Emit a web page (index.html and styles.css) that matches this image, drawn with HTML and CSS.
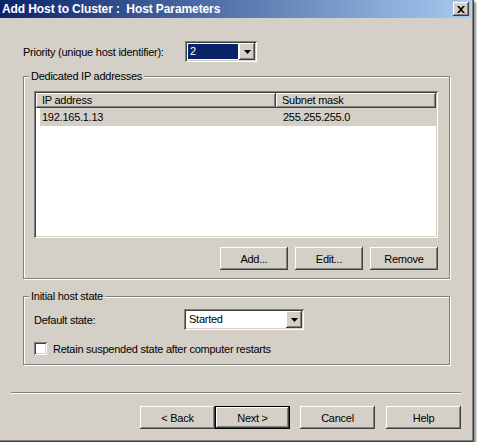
FILE: index.html
```html
<!DOCTYPE html>
<html>
<head>
    <title>Add Host to Cluster</title>
    <link rel="stylesheet" href="styles.css">
</head>
<body>
    <div class="dlg-window">
        <div class="dlg-titlebar">
            <span class="dlg-title">Add Host to Cluster :&nbsp; Host Parameters</span>
            <span class="dlg-close">
                <svg width="8" height="7" viewBox="0 0 8 7"><path d="M0 0h2l2 2 2-2h2L5 3.5 8 7H6L4 5 2 7H0l3-3.5z" fill="#000"/></svg>
            </span>
        </div>

        <div class="dlg-content">
            <div class="field-row priority-row">
                <label class="field-label priority-label">Priority (unique host identifier):</label>
                <div class="combo combo-priority">
                    <div class="combo-field"><span class="combo-value selected">2</span></div>
                    <span class="combo-btn"><svg width="7" height="4" viewBox="0 0 7 4"><path d="M0 0h7L3.5 4z" fill="#000"/></svg></span>
                </div>
            </div>

            <fieldset class="group group-ip">
                <legend>Dedicated IP addresses</legend>
                <div class="listview">
                    <div class="lv-header">
                        <div class="lv-col lv-col-ip">IP address</div>
                        <div class="lv-col lv-col-mask">Subnet mask</div>
                    </div>
                    <div class="lv-row lv-selected">
                        <span class="lv-cell">192.165.1.13</span>
                        <span class="lv-cell lv-cell-mask">255.255.255.0</span>
                    </div>
                </div>
                <div class="group-buttons">
                    <button class="btn btn-small" type="button">Add...</button>
                    <button class="btn btn-small" type="button">Edit...</button>
                    <button class="btn btn-small" type="button">Remove</button>
                </div>
            </fieldset>

            <fieldset class="group group-state">
                <legend>Initial host state</legend>
                <div class="field-row">
                    <label class="field-label state-label">Default state:</label>
                    <div class="combo combo-state">
                        <div class="combo-field"><span class="combo-value">Started</span></div>
                        <span class="combo-btn"><svg width="7" height="4" viewBox="0 0 7 4"><path d="M0 0h7L3.5 4z" fill="#000"/></svg></span>
                    </div>
                </div>
                <div class="check-row">
                    <span class="checkbox"></span>
                    <span class="check-label">Retain suspended state after computer restarts</span>
                </div>
            </fieldset>
        </div>

        <div class="dlg-separator"></div>

        <div class="dlg-footer">
            <button class="btn btn-wide" type="button">&lt; Back</button>
            <button class="btn btn-wide btn-default" type="button">Next &gt;</button>
            <button class="btn btn-wide btn-cancel" type="button">Cancel</button>
            <button class="btn btn-wide btn-help" type="button">Help</button>
        </div>
    </div>
</body>
</html>
```

FILE: styles.css
```css
body {
    margin: 0px;
    background-color: #FFFFFF;
    font-family: "Liberation Sans", Arial, sans-serif;
    font-size: 11px;
    letter-spacing: -0.25px;
    color: #000000;
}

.dlg-window {
    width: 474px;
    height: 442px;
    box-sizing: border-box;
    padding-right: 3px;
    padding-bottom: 3px;
    background-color: #D4D0C8;
    box-shadow: inset -1px -1px 0 #404040, inset -2px -2px 0 #808080, 2px 2px 2px rgba(0, 0, 0, 0.45);
}

.dlg-titlebar {
    height: 18px;
    display: flex;
    align-items: center;
    justify-content: space-between;
    padding-left: 2px;
    background: linear-gradient(to right, #0A246A, #A6CAF0);
}

.dlg-title {
    color: #FFFFFF;
    font-weight: bold;
    font-size: 12px;
    letter-spacing: -0.1px;
    white-space: nowrap;
}

.dlg-close {
    width: 16px;
    height: 14px;
    margin-right: 2px;
    display: flex;
    align-items: center;
    justify-content: center;
    background-color: #D4D0C8;
    box-shadow: inset -1px -1px 0 #404040, inset 1px 1px 0 #FFFFFF, inset -2px -2px 0 #808080;
}

.dlg-content {
    padding-left: 23px;
}

/* rows with a label and a combo */
.field-row {
    display: flex;
    align-items: center;
    height: 21px;
}

.priority-row {
    margin-top: 23px;
}

.field-label {
    flex: none;
}

.priority-label {
    width: 162px;
}

.state-label {
    width: 150px;
}

.combo {
    height: 21px;
    box-sizing: border-box;
    padding: 2px;
    display: flex;
    background-color: #FFFFFF;
    box-shadow: inset 1px 1px 0 #808080, inset -1px -1px 0 #FFFFFF, inset 2px 2px 0 #404040, inset -2px -2px 0 #D4D0C8;
}

.combo-priority {
    width: 72px;
}

.combo-state {
    width: 120px;
}

.combo-field {
    flex: 1;
    padding: 1px 1px 1px 1px;
    display: flex;
}

.combo-value {
    flex: 1;
    padding-left: 2px;
    line-height: 15px;
}

.combo-value.selected {
    background-color: #0A246A;
    color: #FFFFFF;
}

.combo-btn {
    width: 16px;
    height: 17px;
    display: flex;
    align-items: center;
    justify-content: center;
    background-color: #D4D0C8;
    box-shadow: inset -1px -1px 0 #404040, inset 1px 1px 0 #FFFFFF, inset -2px -2px 0 #808080;
}

/* group boxes */
.group {
    width: 427px;
    box-sizing: border-box;
    margin: 0px;
    padding: 8px 11px 8px 10px;
    border: 1px solid #808080;
    box-shadow: 1px 1px 0 #FFFFFF, inset 1px 1px 0 #FFFFFF;
}

.group legend {
    margin-left: -5px;
    padding: 0px 2px;
    line-height: 13px;
    background-color: #D4D0C8;
}

.group-ip {
    margin-top: 8px;
}

.group-state {
    margin-top: 11px;
    padding-top: 6px;
    padding-bottom: 9px;
}

.listview {
    width: 404px;
    height: 147px;
    box-sizing: border-box;
    padding: 2px;
    background-color: #FFFFFF;
    box-shadow: inset 1px 1px 0 #808080, inset -1px -1px 0 #FFFFFF, inset 2px 2px 0 #404040, inset -2px -2px 0 #D4D0C8;
}

.lv-header {
    display: flex;
    height: 15px;
}

.lv-col {
    box-sizing: border-box;
    padding-left: 6px;
    line-height: 15px;
    background-color: #D4D0C8;
    box-shadow: inset -1px -1px 0 #404040, inset 1px 1px 0 #FFFFFF, inset -2px -2px 0 #808080;
}

.lv-col-ip {
    width: 240px;
}

.lv-col-mask {
    width: 160px;
}

.lv-row {
    display: flex;
    margin-left: 4px;
    height: 18px;
    line-height: 18px;
}

.lv-selected {
    background-color: #D4D0C8;
}

.lv-cell {
    width: 236px;
    padding-left: 2px;
    box-sizing: border-box;
}

.lv-cell-mask {
    padding-left: 7px;
    width: auto;
}

.group-buttons {
    display: flex;
    justify-content: flex-end;
    gap: 7px;
    width: 404px;
    margin-top: 9px;
}

/* buttons */
.btn {
    height: 23px;
    border: none;
    padding: 0px;
    font-family: "Liberation Sans", Arial, sans-serif;
    font-size: 11px;
    letter-spacing: -0.25px;
    color: #000000;
    background-color: #D4D0C8;
    box-shadow: inset -1px -1px 0 #404040, inset 1px 1px 0 #FFFFFF, inset -2px -2px 0 #808080;
}

.btn-small {
    width: 68px;
}

.btn-wide {
    width: 75px;
}

.btn-default {
    box-shadow: inset 0 0 0 1px #000000, inset -2px -2px 0 #404040, inset 2px 2px 0 #FFFFFF, inset -3px -3px 0 #808080;
}

.btn-cancel {
    margin-left: 10px;
}

.btn-help {
    margin-left: 11px;
}

.check-row {
    display: flex;
    align-items: center;
    margin-top: 12px;
    height: 13px;
}

.checkbox {
    width: 13px;
    height: 13px;
    box-sizing: border-box;
    background-color: #FFFFFF;
    box-shadow: inset 1px 1px 0 #808080, inset -1px -1px 0 #FFFFFF, inset 2px 2px 0 #404040, inset -2px -2px 0 #D4D0C8;
}

.check-label {
    margin-left: 6px;
}

.dlg-separator {
    margin: 27px 0px 0px 11px;
    width: 450px;
    border-top: 1px solid #808080;
    border-bottom: 1px solid #FFFFFF;
}

.dlg-footer {
    display: flex;
    justify-content: flex-end;
    padding-right: 10px;
    margin-top: 12px;
}
```
